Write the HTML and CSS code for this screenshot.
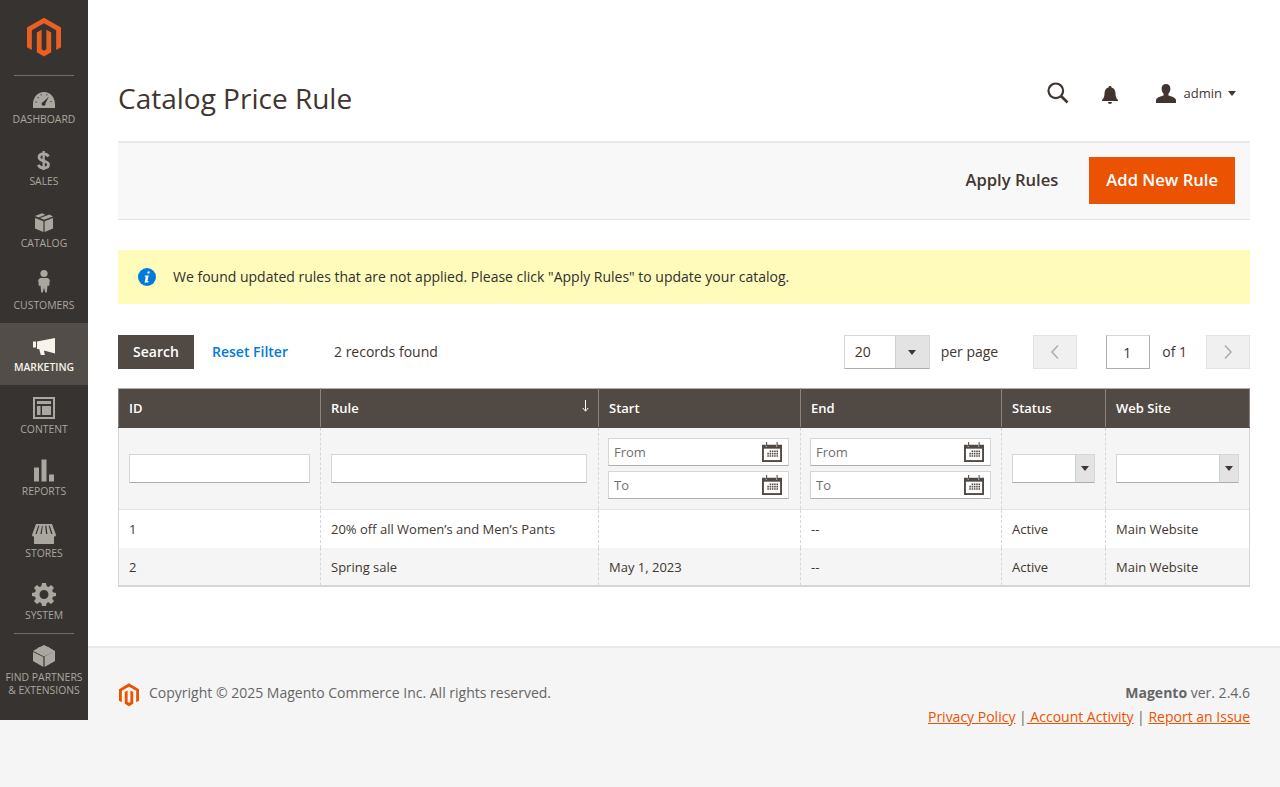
FILE: index.html
```html
<!DOCTYPE html>
<html lang="en">
<head>
  <meta charset="UTF-8">
  <title>Catalog Price Rule / Magento Admin</title>
  <link rel="stylesheet" href="styles.css">
</head>
<body>
  <svg class="sprite" aria-hidden="true">
    <symbol id="logo" viewBox="0 0 43 50">
      <path d="M21.5 0 0 12.4v24.9l6.1 3.5V15.9L21.5 7l15.4 8.9v24.9l6.1-3.5V12.4z"/>
      <path d="M24.5 39.9l-3 1.8-3-1.8V15.2l-6.1 3.6v24.8l9.1 5.4 9.1-5.4V18.8l-6.1-3.6z"/>
    </symbol>
    <symbol id="cal" viewBox="0 0 21 21">
      <path d="M0 3h4v2h1V3h10v2h1V3h5v18H0z"/>
      <path d="M4.3 0h1.1v4.4H4.3zM15.3 0h1.1v4.4h-1.1z"/>
      <path fill="#fff" d="M2 7h17v12H2z"/>
      <path d="M8 9h1.6v1.6H8zm2.4 0H12v1.6h-1.6zm2.4 0h1.6v1.6h-1.6zm2.4 0h1.6v1.6h-1.6zM5.6 11.4h1.6V13H5.6zm2.4 0h1.6V13H8zm2.4 0H12V13h-1.6zm2.4 0h1.6V13h-1.6zm2.4 0h1.6V13h-1.6zM5.6 13.8h1.6v1.6H5.6zm2.4 0h1.6v1.6H8zm2.4 0H12v1.6h-1.6zm2.4 0h1.6v1.6h-1.6zm2.4 0h1.6v1.6h-1.6z"/>
    </symbol>
  </svg>

  <div class="page">
    <nav class="sidebar">
      <a class="brand" href="#"><svg class="brand-logo"><use href="#logo"/></svg></a>
      <a class="nav-item nav-first" href="#">
        <svg class="nav-icon" viewBox="0 0 24 24"><path fill-rule="evenodd" d="M12 4C5.6 4 1 9.500 1 16v4h22v-4C23 9.500 18.400 4 12 4zM16.800 8.800l-3.300 6.400a2 2 0 1 1-2.500-1.300zM6 8.700l1 1-.7.7-1-1zM3.600 13.400l1.300.4-.3.900-1.300-.4zM9.300 6l.5 1.300-.9.300-.5-1.300zM14.700 6l.9.3-.5 1.300-.9-.3zM19.500 12.900l.4.900-1.300.5-.4-.9z"/></svg>
        <span>Dashboard</span>
      </a>
      <a class="nav-item" href="#">
        <svg class="nav-icon" viewBox="0 0 24 24"><path d="M10.500 1h2.300v19h-2.300z"/><path d="M16.500 6.500C15.500 4.500 13.800 3.800 11.500 3.800 8.800 3.800 7 5 7 7.300 7 12 16.500 10 16.500 14.500 16.500 16.800 14.500 18 11.700 18 9.300 18 7.300 17 6.300 14.800" fill="none" stroke="#aaa6a0" stroke-width="2.800"/></svg>
        <span>Sales</span>
      </a>
      <a class="nav-item" href="#">
        <svg class="nav-icon" viewBox="0 0 24 24"><path d="M3 6l8.400 3.300V20L3 16.500zM21 6v10.500L12.600 20V9.300zM10 1.200 3 4l3.500 1.500 7-2.800zM14.800 3.400 8 6.100 12 7.800l9-3.400-3.500-2z"/></svg>
        <span>Catalog</span>
      </a>
      <a class="nav-item" href="#">
        <svg class="nav-icon" viewBox="0 5 24 24"><circle cx="12" cy="4.500" r="3.600"/><path d="M8 9h8l1.800 2-.6 6-1.700-.5-.7 7h-1.600L12 18.500l-1.200 5H9.200l-.7-7-1.700.5-.6-6z"/></svg>
        <span>Customers</span>
      </a>
      <a class="nav-item nav-active" href="#">
        <svg class="nav-icon" viewBox="0 0 24 24"><path d="M1 5.500h3v6H1zM5 5.500 23 2v15.500L12 14.500l.8 4.500h-4L7.200 13H5z"/></svg>
        <span>Marketing</span>
      </a>
      <a class="nav-item" href="#">
        <svg class="nav-icon" viewBox="0 2 24 24"><path fill-rule="evenodd" d="M1 1h22v22H1zM3 3v18h18V3z"/><path d="M5 5h14v3H5zM5 10h3.500v9H5zM10 10h9v9h-9z"/></svg>
        <span>Content</span>
      </a>
      <a class="nav-item" href="#">
        <svg class="nav-icon" viewBox="0 1.500 24 24"><path d="M2 9h5v14H2zM9.500 1h5v22h-5zM17 16h5v7h-5z"/></svg>
        <span>Reports</span>
      </a>
      <a class="nav-item" href="#">
        <svg class="nav-icon" viewBox="0 0 24 24"><path fill-rule="evenodd" d="M4 2h16l4 11c0 1-1 1.600-2 1.600v7.400H2v-7.400C1 14.600 0 14 0 13zM6.200 3.800 3.400 12h1.300l2.700-8.200zm3.800 0L8.400 12h1.300l1.100-8.200zm3.200 0 .9 8.200h1.300l-1-8.200zm3.400 0L19.200 12h1.400L17.800 3.800z"/></svg>
        <span>Stores</span>
      </a>
      <a class="nav-item" href="#">
        <svg class="nav-icon" viewBox="0 2 24 24"><path fill-rule="evenodd" d="M10 1h4l.7 3.200 1.700.7L19.100 3 22 5.800l-1.800 2.800.7 1.700L24 11v3l-3.100.7-.7 1.700 1.800 2.800L19.100 22l-2.700-1.800-1.700.7L14 24h-4l-.7-3.100-1.700-.7L4.900 22 2 19.200l1.800-2.800-.7-1.700L0 14v-3l3.100-.7.700-1.700L2 5.800 4.900 3l2.700 1.900 1.700-.7zM12 8a4.500 4.500 0 1 0 0 9 4.500 4.500 0 0 0 0-9z"/></svg>
        <span>System</span>
      </a>
      <a class="nav-item nav-partners" href="#">
        <svg class="nav-icon" viewBox="0 0 24 24"><path fill-rule="evenodd" d="M12 1l3.500 1.800c1 0 1.500.5 2 1L23 7v10l-10.400 6V12.500L23 7l-11 5.500L1 7l5-3c.5-.7 1-1 2-1zM1 8l10.400 5v10L1 17z"/></svg>
        <span>Find Partners<br>&amp; Extensions</span>
      </a>
    </nav>

    <div class="main">
      <header class="page-header">
        <h1>Catalog Price Rule</h1>
        <div class="header-actions">
          <svg class="icon-search" viewBox="0 0 22 22"><circle cx="8.800" cy="8.800" r="7.300" fill="none" stroke="#41362f" stroke-width="2.200"/><path d="M14 14l6.500 6.500" stroke="#41362f" stroke-width="2.600" fill="none"/></svg>
          <svg class="icon-bell" viewBox="0 0 16 18"><path fill="#41362f" d="M8 0c1 0 1.500.6 1.500 1.400C12.300 2 13.500 4.500 13.500 7.500c0 3 .8 4.800 2.500 6.500v1H0v-1c1.700-1.700 2.500-3.500 2.500-6.500 0-3 1.200-5.500 4-6.100C6.500.6 7 0 8 0zM6 16h4c0 1-.8 2-2 2s-2-1-2-2z"/></svg>
          <div class="user-menu">
            <svg class="icon-user" viewBox="0 0 20 19"><path fill="#41362f" d="M10 0c2.700 0 4.400 2 4.400 4.800 0 2-.8 3.800-2 5v1.700c2.500 1 7 1.700 7.600 4.400V19H0v-3.100c.6-2.700 5.100-3.400 7.600-4.400V9.800c-1.200-1.200-2-3-2-5C5.600 2 7.300 0 10 0z"/></svg>
            <span class="user-name">admin</span>
            <span class="caret"></span>
          </div>
        </div>
      </header>

      <div class="action-bar">
        <a class="btn-apply" href="#">Apply Rules</a>
        <a class="btn-primary" href="#">Add New Rule</a>
      </div>

      <div class="notice">
        <svg class="icon-info" viewBox="0 0 18 18"><circle cx="9" cy="9" r="9" fill="#007bdb"/><path fill="#fff" d="M9.700 3.500h2.100l-.4 2.100H9.300zM7 7.500h3.700l-1.300 5.600h1.100l-.3 1.300H6.600l1.200-5.600H6.700z"/></svg>
        <span>We found updated rules that are not applied. Please click "Apply Rules" to update your catalog.</span>
      </div>

      <div class="toolbar">
        <button class="btn-search" type="button">Search</button>
        <a class="reset-link" href="#">Reset Filter</a>
        <span class="records">2 records found</span>
        <div class="pager">
          <div class="perpage">
            <span class="perpage-value">20</span>
            <span class="perpage-arrow"><span class="caret"></span></span>
          </div>
          <span class="perpage-label">per page</span>
          <span class="page-btn page-prev"><svg viewBox="0 0 10 16"><path d="M8 1.500 2 8l6 6.500" fill="none" stroke="#adadad" stroke-width="1.500"/></svg></span>
          <input class="page-input" type="text" value="1">
          <span class="page-of">of 1</span>
          <span class="page-btn"><svg viewBox="0 0 10 16"><path d="M2 1.500 8 8l-6 6.500" fill="none" stroke="#adadad" stroke-width="1.500"/></svg></span>
        </div>
      </div>

      <table class="grid">
        <colgroup>
          <col class="col-id"><col class="col-rule"><col class="col-start"><col class="col-end"><col class="col-status"><col>
        </colgroup>
        <thead>
          <tr>
            <th>ID</th>
            <th>Rule<svg class="sort-arrow" viewBox="0 0 7 12"><path d="M3.500 0v11M.8 8l2.700 3.200L6.200 8" fill="none" stroke="#fff"/></svg></th>
            <th>Start</th>
            <th>End</th>
            <th>Status</th>
            <th>Web Site</th>
          </tr>
        </thead>
        <tbody>
          <tr class="filters">
            <td><input class="field" type="text"></td>
            <td class="filter-rule"><input class="field" type="text"></td>
            <td>
              <div class="date-field"><input class="field" type="text" placeholder="From"><svg class="cal"><use href="#cal"/></svg></div>
              <div class="date-field"><input class="field" type="text" placeholder="To"><svg class="cal"><use href="#cal"/></svg></div>
            </td>
            <td>
              <div class="date-field"><input class="field" type="text" placeholder="From"><svg class="cal"><use href="#cal"/></svg></div>
              <div class="date-field"><input class="field" type="text" placeholder="To"><svg class="cal"><use href="#cal"/></svg></div>
            </td>
            <td><div class="filter-select"><span class="filter-arrow"><span class="caret"></span></span></div></td>
            <td><div class="filter-select"><span class="filter-arrow"><span class="caret"></span></span></div></td>
          </tr>
          <tr>
            <td>1</td>
            <td>20% off all Women’s and Men’s Pants</td>
            <td></td>
            <td>--</td>
            <td>Active</td>
            <td>Main Website</td>
          </tr>
          <tr class="row-alt">
            <td>2</td>
            <td>Spring sale</td>
            <td>May 1, 2023</td>
            <td>--</td>
            <td>Active</td>
            <td>Main Website</td>
          </tr>
        </tbody>
      </table>

      <footer class="footer">
        <div class="copyright">
          <svg class="footer-logo"><use href="#logo"/></svg>
          <span>Copyright © 2025 Magento Commerce Inc. All rights reserved.</span>
        </div>
        <div class="footer-right">
          <div class="version"><strong>Magento</strong> ver. 2.4.6</div>
          <div class="footer-links">
            <a href="#">Privacy Policy</a> |<a href="#"> Account Activity</a> | <a href="#">Report an Issue</a>
          </div>
        </div>
      </footer>
    </div>
  </div>
</body>
</html>
```

FILE: styles.css
```css
* {
  box-sizing: border-box;
}

html, body {
  height: 100%;
}

body {
  margin: 0;
  background-color: #f5f5f5;
  color: #41362f;
  font-family: "Open Sans", "Liberation Sans", sans-serif;
  font-size: 14px;
}

a {
  text-decoration: none;
}

.sprite {
  display: none;
}

.page {
  display: flex;
  align-items: flex-start;
}

/* sidebar */
.sidebar {
  flex: 0 0 88px;
  height: 720px;
  background-color: #373330;
  display: flex;
  flex-direction: column;
}

.brand {
  height: 75px;
  display: flex;
  justify-content: center;
  padding-top: 17px;
}

.brand-logo {
  width: 34px;
  height: 41px;
  fill: #eb5f23;
}

.nav-item {
  position: relative;
  height: 62px;
  display: flex;
  flex-direction: column;
  align-items: center;
  padding-top: 13px;
  color: #aaa6a0;
  fill: #aaa6a0;
  font-size: 10.4px;
  line-height: 14px;
  text-align: center;
  text-transform: uppercase;
}

.nav-first::before,
.nav-partners::before {
  content: "";
  position: absolute;
  top: 0;
  left: 14px;
  right: 14px;
  height: 1px;
  background-color: #736d68;
}

.nav-icon {
  width: 24px;
  height: 24px;
  overflow: visible;
}

.nav-active {
  background-color: #524d49;
  color: #f7f3eb;
  fill: #f7f3eb;
  font-weight: 600;
}

.nav-partners {
  height: 87px;
  padding-top: 11px;
  line-height: 13px;
}

.nav-partners .nav-icon {
  margin-bottom: 3px;
}

/* page content */
.main {
  flex: 1;
  min-width: 0;
  background-color: #fff;
  padding: 0 30px;
}

.page-header {
  height: 141px;
  padding: 54px 14px 0 0;
  display: flex;
  align-items: center;
  justify-content: space-between;
}

.page-header h1 {
  margin: 0;
  font-size: 28px;
  font-weight: 400;
}

.header-actions {
  display: flex;
  align-items: center;
  margin-bottom: 9px;
}

.icon-search {
  width: 22px;
  height: 22px;
}

.icon-bell {
  width: 16px;
  height: 18px;
  margin: 4px 38px 0 33px;
}

.user-menu {
  display: flex;
  align-items: center;
}

.icon-user {
  width: 20px;
  height: 19px;
  margin-right: 8px;
}

.user-name {
  font-size: 13px;
  margin-right: 6px;
}

.caret {
  display: inline-block;
  width: 0;
  height: 0;
  border-left: 4px solid transparent;
  border-right: 4px solid transparent;
  border-top: 5px solid #41362f;
}

.action-bar {
  height: 79px;
  padding: 0 15px 1px 0;
  background-color: #f8f8f8;
  border-top: 2px solid #e8e8e8;
  border-bottom: 1px solid #e3e3e3;
  display: flex;
  align-items: center;
  justify-content: flex-end;
}

.btn-apply {
  margin: 0 31px 2px 0;
  color: #41362f;
  font-size: 16.6px;
  font-weight: 600;
}

.btn-primary {
  height: 47px;
  padding: 0 17px;
  background-color: #eb5202;
  color: #fff;
  font-size: 16.6px;
  font-weight: 600;
  line-height: 45px;
}

.notice {
  height: 54px;
  margin-top: 30px;
  padding: 0 0 1px 20px;
  background-color: #fffbbb;
  display: flex;
  align-items: center;
  color: #303030;
}

.icon-info {
  width: 18px;
  height: 18px;
  margin-right: 17px;
}

/* toolbar */
.toolbar {
  height: 34px;
  margin-top: 31px;
  display: flex;
  align-items: center;
}

.btn-search {
  width: 76px;
  height: 34px;
  padding: 0 0 2px;
  background-color: #514943;
  border: 1px solid #514943;
  color: #fff;
  font-family: inherit;
  font-size: 14px;
  font-weight: 600;
}

.reset-link {
  margin: 0 0 2px 18px;
  color: #007bdb;
  font-weight: 600;
}

.records {
  margin: 0 0 2px 46px;
}

.pager {
  margin-left: auto;
  display: flex;
  align-items: center;
}

.perpage {
  width: 86px;
  height: 34px;
  display: flex;
  background-color: #fff;
  border: 1px solid #d6d6d6;
  border-bottom-color: #adadad;
}

.perpage-value {
  flex: 1;
  padding-left: 10px;
  line-height: 31px;
}

.perpage-arrow {
  width: 34px;
  background-color: #e3e3e3;
  border-left: 1px solid #cfcfcf;
  display: flex;
  align-items: center;
  justify-content: center;
}

.perpage-label {
  margin: 0 35px 2px 11px;
}

.page-btn {
  width: 44px;
  height: 34px;
  background-color: #f0f0f0;
  border: 1px solid #e3e3e3;
  display: flex;
  align-items: center;
  justify-content: center;
}

.page-btn svg {
  width: 10px;
  height: 16px;
}

.page-prev {
  margin-right: 29px;
}

.page-input {
  width: 44px;
  height: 34px;
  padding: 0 2px 0 0;
  border: 1px solid #adadad;
  border-top-color: #d6d6d6;
  color: #41362f;
  font-family: inherit;
  font-size: 14px;
  text-align: center;
}

.page-of {
  margin: 0 19px 2px 12px;
}

/* grid */
.grid {
  width: 100%;
  table-layout: fixed;
  border-collapse: collapse;
  margin-top: 19px;
  font-size: 13px;
}

.col-id {
  width: 202px;
}

.col-rule {
  width: 278px;
}

.col-start {
  width: 202px;
}

.col-end {
  width: 201px;
}

.col-status {
  width: 104px;
}

.grid th {
  position: relative;
  height: 39px;
  padding: 0 10px;
  background-color: #514943;
  border: 1px solid #8a837f;
  border-top-color: #adadad;
  border-bottom-color: #514943;
  color: #fff;
  font-weight: 600;
  text-align: left;
}

.sort-arrow {
  position: absolute;
  top: 11px;
  right: 9px;
  width: 7px;
  height: 12px;
}

.grid td {
  height: 38px;
  padding: 0 10px;
  border: 1px dashed #d6d6d6;
  border-top: 0;
  border-bottom: 0;
}

.grid tbody tr:last-child {
  border-bottom: 2px solid #d6d6d6;
}

.grid td:first-child,
.grid th:first-child {
  border-left-style: solid;
}

.grid td:last-child {
  border-right-style: solid;
}

.filters {
  border-bottom: 1px solid #e3e3e3;
}

.filters td {
  height: 82px;
  background-color: #f5f5f5;
}

.grid .row-alt td {
  padding-top: 2px;
  background-color: #f5f5f5;
}

.field {
  display: block;
  width: 100%;
  height: 29px;
  padding: 0 5px;
  background-color: #fff;
  border: 1px solid #d6d6d6;
  border-bottom-color: #adadad;
  font-family: inherit;
  font-size: 13px;
}

.field::placeholder {
  color: #6f6f6f;
}

.filter-rule .field {
  width: calc(100% - 1px);
}

.date-field {
  position: relative;
  width: 181px;
  height: 28px;
  margin-left: -1px;
}

.date-field + .date-field {
  margin-top: 5px;
}

.date-field .field {
  height: 28px;
}

.cal {
  position: absolute;
  top: 4px;
  right: 7px;
  width: 20px;
  height: 20px;
  fill: #514943;
}

.filter-select {
  height: 29px;
  background-color: #fff;
  border: 1px solid #d6d6d6;
  border-bottom-color: #adadad;
  display: flex;
  justify-content: flex-end;
}

.filter-arrow {
  width: 19px;
  background-color: #e3e3e3;
  border-left: 1px solid #cfcfcf;
  display: flex;
  align-items: center;
  justify-content: center;
}

/* footer */
.footer {
  height: 141px;
  margin: 59px -30px 0;
  padding: 35px 30px 0 31px;
  background-color: #f5f5f5;
  border-top: 2px solid #e8e8e8;
  display: flex;
  justify-content: space-between;
  color: #666;
}

.copyright {
  display: flex;
  align-items: flex-start;
}

.copyright span {
  line-height: 20px;
}

.footer-logo {
  width: 20px;
  height: 24px;
  margin-right: 10px;
  fill: #eb5202;
}

.footer-right {
  text-align: right;
  line-height: 20px;
}

.version strong {
  font-weight: 700;
}

.footer-links {
  margin-top: 4px;
}

.footer-links a {
  color: #eb5202;
  text-decoration: underline;
}
```
